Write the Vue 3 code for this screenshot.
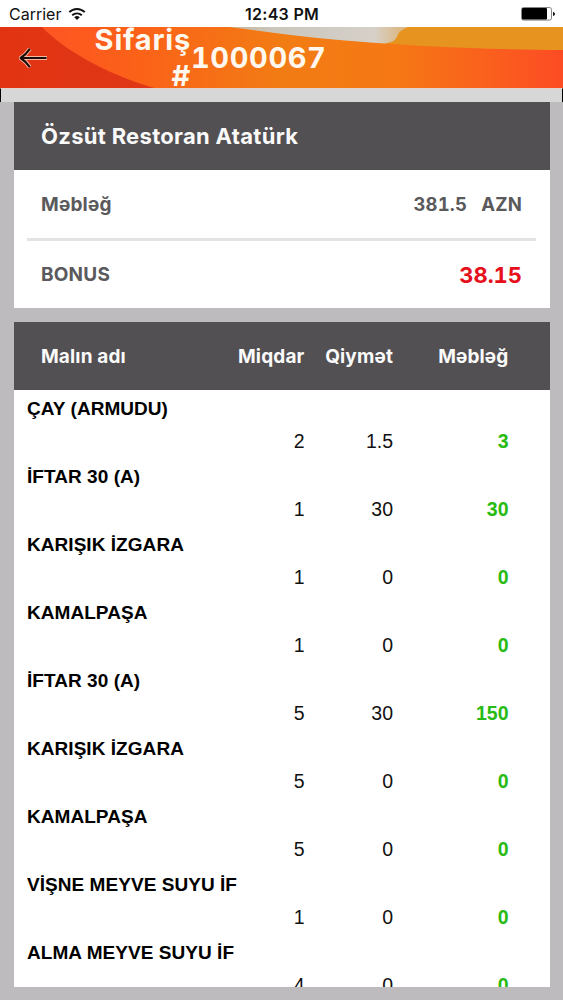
<template>
  <div class="phone">
    <div class="status">
      <div class="carrier">
        <span>Carrier</span>
        <svg class="wifi" viewBox="0 0 18 14" width="18" height="14">
          <path d="M1.3 5.200a10.8 10.8 0 0 1 15.4 0M4.200 8.300a6.900 6.900 0 0 1 9.600 0" fill="none" stroke="#111" stroke-width="1.900" />
          <path d="M9 13L6.200 10.200a4.200 4.200 0 0 1 5.600 0z" fill="#111" />
        </svg>
      </div>
      <span class="clock">12:43 PM</span>
      <svg class="battery" viewBox="0 0 34 14" width="34" height="14">
        <rect x=".5" y=".5" width="30" height="12.6" rx="2" fill="#fff" stroke="#777" stroke-width=".9" />
        <rect x="1" y="1" width="25" height="11.6" rx="1" fill="#000" />
        <path d="M32 4.8q2 .7 2 2.1t-2 2.1z" fill="#111" />
      </svg>
    </div>

    <header class="navbar">
      <svg class="wave" viewBox="0 0 563 61" width="563" height="61">
        <defs>
          <linearGradient id="mid">
            <stop offset="0" stop-color="#ff4f28" />
            <stop offset=".24" stop-color="#fb6118" />
            <stop offset=".5" stop-color="#f27c14" />
            <stop offset=".7" stop-color="#f57814" />
            <stop offset=".88" stop-color="#fa5e1e" />
            <stop offset="1" stop-color="#fd4b24" />
          </linearGradient>
          <linearGradient id="dark">
            <stop offset="0" stop-color="#e23413" />
            <stop offset="1" stop-color="#df3717" />
          </linearGradient>
          <linearGradient id="grey" gradientUnits="userSpaceOnUse" x1="230" y1="0" x2="400" y2="0">
            <stop offset="0" stop-color="#c8b596" />
            <stop offset=".25" stop-color="#cac6bc" />
            <stop offset=".85" stop-color="#d6d0c8" />
            <stop offset="1" stop-color="#dcb985" />
          </linearGradient>
        </defs>
        <rect width="563" height="61" fill="url(#mid)" />
        <path d="M0 0H42C63 22 104 46 154 61H0z" fill="url(#dark)" />
        <path d="M230 0C310 11 410 22 563 23V0z" fill="#e79320" />
        <path d="M230 0C286 8 340 14 385 16.500Q395 15 397 10Q398 4 408 0z" fill="url(#grey)" />
      </svg>
      <svg class="back" viewBox="0 0 30 22" width="30" height="22" fill="none" stroke-linejoin="round">
        <path d="M10.800 1.800Q7 7.500 1.600 11Q7 14.500 10.800 20.200M2 11h26" stroke="#f8b7a2" stroke-width="4" />
        <path d="M10.800 1.800Q7 7.500 1.600 11Q7 14.500 10.800 20.200M2 11h25.500" stroke="#1c0d08" stroke-width="2.100" />
      </svg>
      <div class="title">
        <span class="label">Sifariş #</span>
        <span class="number">1000067</span>
      </div>
    </header>
    <div class="strip"></div>

    <main>
      <section class="card summary">
        <h2 class="head">Özsüt Restoran Atatürk</h2>
        <div class="line">
          <span>Məbləğ</span>
          <span class="amount"><span>381.5</span><span>AZN</span></span>
        </div>
        <div class="line last">
          <span>BONUS</span>
          <span class="bonus">38.15</span>
        </div>
      </section>

      <section class="card order">
        <div class="head cols">
          <span>Malın adı</span>
          <span class="right">Miqdar</span>
          <span class="right">Qiymət</span>
          <span class="right">Məbləğ</span>
        </div>
        <div v-for="(item, i) in items" :key="i" class="item">
          <div class="name">{{ item.name }}</div>
          <div class="cols values">
            <span></span>
            <span class="right">{{ item.count }}</span>
            <span class="right">{{ item.price }}</span>
            <span class="right sum">{{ item.sum }}</span>
          </div>
        </div>
      </section>
    </main>
  </div>
</template>

<script setup>
import { ref } from 'vue'

const items = ref([
  { name: 'ÇAY (ARMUDU)', count: 2, price: 1.5, sum: 3 },
  { name: 'İFTAR 30 (A)', count: 1, price: 30, sum: 30 },
  { name: 'KARIŞIK İZGARA', count: 1, price: 0, sum: 0 },
  { name: 'KAMALPAŞA', count: 1, price: 0, sum: 0 },
  { name: 'İFTAR 30 (A)', count: 5, price: 30, sum: 150 },
  { name: 'KARIŞIK İZGARA', count: 5, price: 0, sum: 0 },
  { name: 'KAMALPAŞA', count: 5, price: 0, sum: 0 },
  { name: 'VİŞNE MEYVE SUYU İF', count: 1, price: 0, sum: 0 },
  { name: 'ALMA MEYVE SUYU İF', count: 4, price: 0, sum: 0 }
])
</script>

<style>
body {
  margin: 0;
  background: #bdbbbe;
}
</style>

<style scoped>
.phone {
  display: flex;
  flex-direction: column;
  width: 563px;
  height: 1000px;
  overflow: hidden;
  background: #bdbbbe;
  font-family: Inter, "Liberation Sans", sans-serif;
}
.status {
  display: grid;
  grid-template-columns: 1fr auto 1fr;
  align-items: center;
  flex: none;
  height: 27px;
  padding: 1px 8px 0 9px;
  box-sizing: border-box;
  background: #fff;
  color: #111;
  font-size: 16px;
}
.carrier {
  display: flex;
  align-items: center;
  gap: 7px;
}
.clock {
  font-weight: 600;
  letter-spacing: 0.3px;
}
.battery {
  justify-self: end;
}
.navbar {
  display: flex;
  align-items: center;
  position: relative;
  flex: none;
  height: 61px;
}
.wave {
  position: absolute;
  left: 0;
  top: 0;
}
.back {
  position: relative;
  margin-left: 19px;
}
.title {
  display: flex;
  align-items: center;
  position: relative;
  margin-left: 41px;
  padding-top: 1px;
  color: #fff8ee;
  font-size: 29px;
  font-weight: 650;
  line-height: 36px;
  letter-spacing: 0.8px;
}
.label {
  width: 101px;
  text-align: right;
}
.number {
  font-feature-settings: "tnum";
  letter-spacing: 0.6px;
}
.strip {
  flex: none;
  height: 14px;
  background: #d7d7d7;
  border-top: 1px solid #e3d3c8;
  border-left: 1px solid #000;
  border-right: 1px solid #000;
  box-sizing: border-box;
}
main {
  display: flex;
  flex-direction: column;
  flex: 1;
  min-height: 0;
  gap: 14px;
  padding: 0 13.5px 13.5px;
}
.card {
  background: #fff;
  overflow: hidden;
}
.summary {
  flex: none;
  height: 206px;
}
.order {
  flex: 1;
  min-height: 0;
}
.head {
  height: 68px;
  margin: 0;
  padding: 0 27.5px;
  background: #535053;
  color: #fafafa;
  font-size: 22px;
  font-weight: 650;
  line-height: 68px;
  letter-spacing: 0.3px;
}
.line {
  display: flex;
  justify-content: space-between;
  align-items: center;
  height: 68px;
  margin: 0 13.5px;
  padding: 0 14px;
  border-bottom: 3px solid #e4e2e4;
  color: #5a595b;
  font-size: 19px;
  font-weight: 650;
  letter-spacing: 0.2px;
}
.line.last {
  height: 67px;
  border-bottom: none;
}
.amount {
  display: flex;
  gap: 14px;
  font-size: 18.5px;
  font-feature-settings: "tnum";
}
.bonus {
  color: #e60f1c;
  font-size: 22px;
  font-weight: 700;
  font-feature-settings: "tnum";
  letter-spacing: 0;
}
.cols {
  display: grid;
  grid-template-columns: 1fr 90px 88.5px 115.5px;
  padding: 0 41px 0 27.5px;
}
.head.cols {
  font-size: 19px;
  line-height: 69px;
  letter-spacing: 0.15px;
}
.right {
  text-align: right;
}
.item {
  height: 68px;
  font-family: "Liberation Sans", Arial, sans-serif;
  font-size: 19.5px;
  color: #111;
}
.name {
  height: 34px;
  padding-left: 13.5px;
  line-height: 38px;
  color: #000;
  font-size: 19px;
  font-weight: 700;
  letter-spacing: 0.05px;
}
.values {
  line-height: 35px;
}
.sum {
  color: #27bb13;
  font-weight: 700;
}
</style>
